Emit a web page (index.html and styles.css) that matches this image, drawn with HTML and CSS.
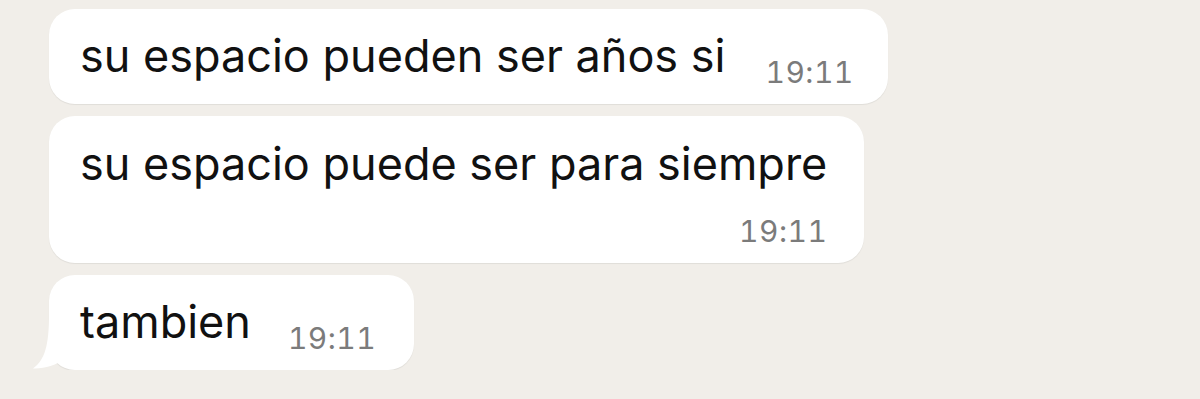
FILE: index.html
```html
<!DOCTYPE html>
<html>
<head>
  <meta charset="utf-8">
  <title>Chat</title>
  <link rel="stylesheet" href="styles.css">
</head>
<body>
  <div class="chat">
    <div class="bubble inline">
      <span class="text">su espacio pueden ser años si</span><span class="time">19:11</span>
    </div>
    <div class="bubble stacked">
      <span class="text">su espacio puede ser para siempre</span>
      <span class="time">19:11</span>
    </div>
    <div class="bubble inline last">
      <span class="text">tambien</span><span class="time">19:11</span>
      <svg class="tail" width="50" height="56" viewBox="0 0 50 56">
        <path d="M18,0 C18,30 14,45 2,53.5 C14,54 24,50 33,45 L44,20 L44,0 Z" fill="#fff"/>
      </svg>
    </div>
  </div>
</body>
</html>
```

FILE: styles.css
```css
body {
  margin: 0;
  background: #f1eee9;
  font-family: Inter, "Liberation Sans", sans-serif;
}

.chat {
  display: flex;
  flex-direction: column;
  align-items: flex-start;
  gap: 12px;
  padding: 9px 0 0 49px;
}

.bubble {
  position: relative;
  background: #fff;
  border-radius: 26px;
  box-shadow: 0 1px 1px rgba(0, 0, 0, 0.07);
  color: #111;
  font-size: 45px;
  line-height: 56px;
}

.inline {
  padding: 19px 34px 17px 31px;
}

.stacked {
  display: flex;
  flex-direction: column;
  padding: 20px 37px 17px 31px;
}

.time {
  color: #7b7b7b;
  font-size: 30px;
  font-variant-numeric: tabular-nums;
  letter-spacing: 0.5px;
  line-height: 1;
}

.inline .time {
  vertical-align: -11px;
  margin-left: 40px;
}

.stacked .time {
  align-self: flex-end;
  margin-top: 24px;
}

.last {
  padding-right: 38px;
}

.last .time {
  margin-left: 37px;
}

.tail {
  position: absolute;
  left: -18px;
  bottom: -1px;
}
```
